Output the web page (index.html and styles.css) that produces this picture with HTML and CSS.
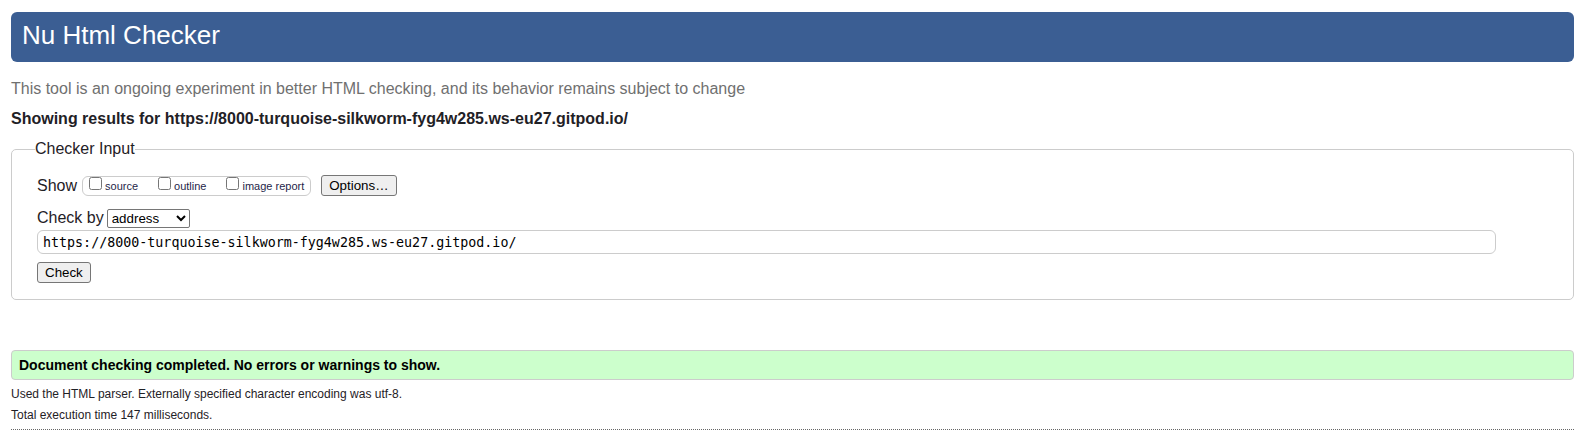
FILE: index.html
```html
<!DOCTYPE html>
<html lang="en">
<head>
<meta charset="utf-8">
<title>Nu Html Checker</title>
<link rel="stylesheet" href="styles.css">
</head>
<body>
<header class="banner"><h1 class="title">Nu Html Checker</h1></header>
<p class="tagline">This tool is an ongoing experiment in better HTML checking, and its behavior remains subject to change</p>
<h2 class="subject">Showing results for https://8000-turquoise-silkworm-fyg4w285.ws-eu27.gitpod.io/</h2>
<form>
  <fieldset class="checker">
    <legend class="legend">Checker Input</legend>
    <div class="show-row">
      <span class="show-label">Show</span>
      <div class="choices">
        <label class="choice"><input class="tick" type="checkbox" name="showsource"><span>source</span></label>
        <label class="choice"><input class="tick" type="checkbox" name="showoutline"><span>outline</span></label>
        <label class="choice"><input class="tick" type="checkbox" name="showimagereport"><span>image report</span></label>
      </div>
      <button class="button" type="button">Options…</button>
    </div>
    <div class="by-row">
      <label for="by">Check by</label>
      <select class="method" id="by">
        <option>address</option>
        <option>file upload</option>
        <option>text input</option>
      </select>
    </div>
    <input class="address" type="url" aria-label="Address" spellcheck="false" value="https://8000-turquoise-silkworm-fyg4w285.ws-eu27.gitpod.io/">
    <button class="button" type="submit">Check</button>
  </fieldset>
</form>
<p class="success">Document checking completed. No errors or warnings to show.</p>
<p class="detail">Used the HTML parser. Externally specified character encoding was utf-8.</p>
<p class="detail">Total execution time 147 milliseconds.</p>
<hr class="rule">
</body>
</html>
```
FILE: styles.css
```css
* {
  box-sizing: border-box;
}

body {
  margin: 0;
  padding: 12px 8px 0 11px;
  background: #fff;
  color: #1f2126;
  font-family: "Liberation Sans", Arial, sans-serif;
  font-size: 16px;
  line-height: 20px;
}

.banner {
  padding: 8px 11px 12px;
  border-radius: 6px;
  background: #3b5e93;
}

.title {
  margin: 0;
  color: #fff;
  font-size: 26px;
  font-weight: normal;
  line-height: 30px;
}

.tagline {
  margin: 17px 0 10px;
  color: #707070;
}

.subject {
  margin: 0 0 10px;
  font-size: 16px;
}

.checker {
  margin: 0;
  padding: 16px 77px 16px 25px;
  border: 1px solid #ccc;
  border-radius: 5px;
}

.legend {
  margin-left: -2px;
  padding: 0;
}

.show-row,
.by-row,
.choices,
.choice {
  display: flex;
  align-items: center;
}

.show-label {
  margin-right: 5px;
}

.choices {
  gap: 20px;
  margin-right: 10px;
  padding: 0 6px;
  border: 1px solid #ccc;
  border-radius: 6px;
  color: #1f1f4a;
  font-size: 11px;
  line-height: 18px;
}

.choice {
  gap: 3px;
}

.tick {
  width: 13px;
  height: 13px;
  margin: 0 0 4px;
}

.button {
  display: block;
  height: 21px;
  padding: 0 7px;
  border: 1px solid #767676;
  border-radius: 3px;
  background: #efefef;
  color: #000;
  font-family: inherit;
}

.by-row {
  gap: 3px;
  margin: 12px 0 2px;
}

.method {
  width: 83px;
  height: 19px;
  border: 1px solid #767676;
  border-radius: 2px;
  background-color: #fff;
  color: #000;
  font-family: inherit;
}

.address {
  display: block;
  width: 100%;
  height: 24px;
  margin-bottom: 8px;
  padding: 0 5px;
  border: 1px solid #ccc;
  border-radius: 6px;
  color: #000;
  font-family: "DejaVu Sans Mono", monospace;
}

.success {
  margin: 50px 0 5px;
  padding: 4px 7px;
  border: 1px solid #ccc;
  border-radius: 4px;
  background: #cfc;
  color: #000;
  font-size: 14px;
  font-weight: bold;
}

.detail {
  margin: 0 0 3px;
  font-size: 12px;
  line-height: 18px;
}

.rule {
  margin: 5px 0 0;
  border: 0;
  border-top: 1px dotted #666;
}
```
